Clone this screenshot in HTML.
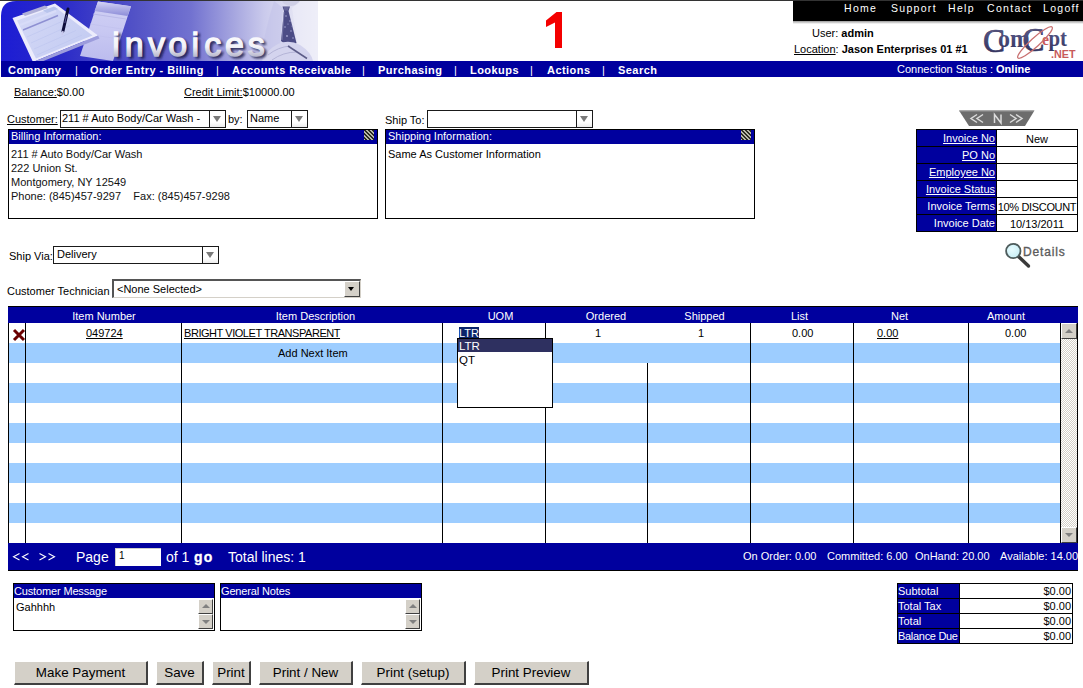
<!DOCTYPE html>
<html><head><meta charset="utf-8">
<style>
*{box-sizing:border-box;margin:0;padding:0}
html,body{width:1083px;height:688px;overflow:hidden;background:#fff}
body{position:relative;font-family:"Liberation Sans",sans-serif;font-size:11px;color:#000}
.a{position:absolute;white-space:nowrap}
.u{text-decoration:underline}
.nav{font-weight:bold;color:#fff;font-size:11px;top:64px;letter-spacing:0.45px}
.tm{color:#fff;font-size:10.5px;top:2px;letter-spacing:1.3px}
.sel{position:absolute;border:1px solid #1a1a1a;background:#fff;font-size:11px}
.sel .ar{position:absolute;right:0;top:0;bottom:0;width:16px;background:linear-gradient(#fff 70%,#ececec);border-left:1px solid #1a1a1a}
.sel .ar:after{content:"";position:absolute;left:3px;top:5px;border-left:4.5px solid transparent;border-right:4.5px solid transparent;border-top:6px solid #7a7a7a}
.sel3{position:absolute;background:#fff;border-top:2px solid #555;border-left:2px solid #555;border-right:1px solid #d4d0c8;border-bottom:1px solid #d4d0c8;font-size:11px}
.sel3 .ar{position:absolute;right:0;top:0;bottom:0;width:16px;background:#d4d0c8;border-top:1px solid #fff;border-left:1px solid #fff;border-right:1px solid #404040;border-bottom:1px solid #404040}
.sel3 .ar:after{content:"";position:absolute;left:3px;top:5px;border-left:3.5px solid transparent;border-right:3.5px solid transparent;border-top:4px solid #000}
.box{position:absolute;border:1px solid #000;background:#fff}
.ic{position:absolute;top:0px;width:10px;height:10px;background:repeating-linear-gradient(45deg,#b8b8a8 0 1.4px,#2a2a20 1.4px 2.8px)}
.box .hd{position:absolute;left:0;right:0;top:0;height:14px;background:#00009e;color:#fff;font-size:11px;padding-left:2px;line-height:13px}
.sbb{background:#d4d0c8;border-top:1px solid #fff;border-left:1px solid #fff;border-right:1px solid #404040;border-bottom:1px solid #404040}
.sbb i{position:absolute;left:3px;border-left:4px solid transparent;border-right:4px solid transparent}
.sbb i.up{top:5px;border-bottom:4px solid #808080}
.sbb i.dn{top:5px;border-top:4px solid #808080}
.btn{background:#d4d0c8;border-top:1px solid #fff;border-left:1px solid #fff;border-right:2px solid #404040;border-bottom:2px solid #404040;font-size:13.4px;text-align:center;line-height:21px}
</style></head>
<body>
<!-- top line -->
<div class="a" style="left:0;top:0;width:1083px;height:1px;background:#333"></div>

<!-- banner -->
<svg class="a" style="left:1px;top:1px" width="317" height="60" viewBox="1 1 317 60">
<defs>
<linearGradient id="bg" x1="1" y1="0" x2="318" y2="0" gradientUnits="userSpaceOnUse">
<stop offset="0" stop-color="#1c1cd4"/><stop offset="0.2" stop-color="#2c2cc8"/><stop offset="0.42" stop-color="#5252c6"/><stop offset="0.6" stop-color="#7272d0"/><stop offset="0.74" stop-color="#a8a8e0"/><stop offset="0.83" stop-color="#cacaec"/><stop offset="0.93" stop-color="#e4e4f4"/><stop offset="1" stop-color="#f0f0f8"/>
</linearGradient>
<linearGradient id="txt" x1="0" y1="30" x2="0" y2="56" gradientUnits="userSpaceOnUse"><stop offset="0" stop-color="#ffffff"/><stop offset="0.65" stop-color="#f2f2f8"/><stop offset="1" stop-color="#bcbcd0"/></linearGradient>
<linearGradient id="pad" x1="0" y1="1" x2="0" y2="61" gradientUnits="userSpaceOnUse"><stop offset="0" stop-color="#d0d0f4"/><stop offset="0.5" stop-color="#c8c8f2"/><stop offset="1" stop-color="#bcbcee"/></linearGradient>
<linearGradient id="roll" x1="0" y1="1" x2="0" y2="16" gradientUnits="userSpaceOnUse"><stop offset="0" stop-color="#d8d8f8"/><stop offset="0.45" stop-color="#b4b4e8"/><stop offset="1" stop-color="#8c8cd8"/></linearGradient>
<linearGradient id="clip" x1="20" y1="10" x2="80" y2="55" gradientUnits="userSpaceOnUse"><stop offset="0" stop-color="#d4d8f6"/><stop offset="1" stop-color="#c4ccf2"/></linearGradient>
<filter id="sh" x="-10%" y="-10%" width="130%" height="140%"><feGaussianBlur stdDeviation="1.2"/></filter>
</defs>
<path d="M1 61 V16 Q1 1 16 1 H318 V61 Z" fill="url(#bg)"/>
<!-- notepad -->
<path d="M98 1.4 L131 6.3 L113 61 L80 56 Z" fill="url(#pad)"/>
<path d="M98 1.4 L131 6.3 L127.5 16 L94.5 11 Z" fill="url(#roll)"/>
<path d="M93 14 L126 19" stroke="#b4b4e4" stroke-width="0.8"/>
<path d="M90 24 L122 29 M87 34 L119 39" stroke="#c0c0ec" stroke-width="0.6"/>
<!-- clipboard -->
<path d="M12.5 18 L55 3.5 L98 35.6 L33 62 Z" fill="#ececfc"/>
<path d="M17 20.5 L55 7 L92.5 35.5 L36 58.5 Z" fill="url(#clip)"/>
<path d="M22 13.5 L45 5.5 L48 8 L25 16 Z" fill="#b0b0d8"/>
<path d="M43 10.5 L54 6.5 L58 9 L47 13 Z" fill="#b8c4ec"/>
<path d="M23 30 L58 15.5" stroke="#8e90d2" stroke-width="1.4"/>
<path d="M20 25 L56 11" stroke="#d8dcf8" stroke-width="2"/>
<path d="M27 37 L64 20.5 M31 43 L70 25.5 M34 49 L76 30.5 M37 55 L82 35" stroke="#bcc4ee" stroke-width="0.6"/>
<path d="M33 62 L98 35.6 L99.5 38.5 L36 64 Z" fill="#9c9cdc"/>
<!-- pen -->
<path d="M68 9 L63 31" stroke="#0c0c3a" stroke-width="3" stroke-linecap="round"/>
<path d="M66.6 15 L64.8 23" stroke="#6a6aa8" stroke-width="0.8"/>
<path d="M63 31 L62.2 35" stroke="#c8c8ec" stroke-width="1.5"/>
<!-- man -->
<ellipse cx="291" cy="0" rx="9" ry="6" fill="#cfcfe6"/>
<path d="M274 1 L283 8 L279 61 L260 61 Q265 30 274 1 Z" fill="#c0c0e8" opacity="0.5"/>
<path d="M300 1 L292 8 L300 61 L318 61 L318 1 Z" fill="#ececf8" opacity="0.6"/>
<path d="M282.5 6.5 L290 6.5 L288.5 11 L296.5 43 L290.5 48 L281 41 L284 11 Z" fill="#4c4c86"/>
<path d="M283.5 7 L289 7 L288 10.5 L284.5 10.5 Z" fill="#66669a"/>
<path d="M284 12 L282 40" stroke="#8a8ab8" stroke-width="0.7"/>
<g fill="#a4a4d0"><circle cx="286" cy="16" r="0.8"/><circle cx="290" cy="21" r="0.8"/><circle cx="285" cy="27" r="0.8"/><circle cx="291" cy="31" r="0.8"/><circle cx="287" cy="36" r="0.9"/><circle cx="293" cy="38" r="0.8"/><circle cx="288" cy="24" r="0.6"/><circle cx="292" cy="26" r="0.6"/></g>
<path d="M262 61 Q266 50 278 44 Q289 39 300 45 Q311 52 313 61 Z" fill="#d4d4ee"/>
<path d="M268 55 Q278 47 290 46 M272 60 Q283 52 297 52" stroke="#b0b0d4" stroke-width="0.9" fill="none"/>
<path d="M288 46 L307 58.5" stroke="#5c5c88" stroke-width="1.5"/>
<!-- text -->
<text x="114.7 127.2 150.6 170.7 194 206.8 227.5 250.3" y="57.5" font-family="Liberation Sans" font-size="34" fill="#10103a" stroke="#10103a" stroke-width="1.3" opacity="0.75" filter="url(#sh)">invoices</text>
<text x="112.2 124.7 148.1 168.2 191.5 204.3 225 247.8" y="55.5" font-family="Liberation Sans" font-size="34" fill="url(#txt)" stroke="url(#txt)" stroke-width="1.3">invoices</text>
</svg>

<!-- red 1 -->
<svg class="a" style="left:540px;top:8px" width="30" height="44" viewBox="540 8 30 44"><path d="M556.5 12 H562 V48 H555 V22.5 L546 27 V20.5 Z" fill="#f40000"/></svg>

<!-- black bar -->
<div class="a" style="left:793px;top:1px;width:290px;height:20px;background:#000"></div>
<div class="a" style="left:793px;top:21px;width:290px;height:3px;background:linear-gradient(#9a9a9a,#fff)"></div>
<div class="a tm" style="left:844px">Home</div>
<div class="a tm" style="left:891px">Support</div>
<div class="a tm" style="left:948px">Help</div>
<div class="a tm" style="left:987px">Contact</div>
<div class="a tm" style="left:1043px">Logoff</div>

<div class="a" style="left:812px;top:27px;font-size:11px">User: <b>admin</b></div>
<div class="a" style="left:794px;top:43px;font-size:11px"><span class="u">Location</span>: <b>Jason Enterprises 01 #1</b></div>

<!-- logo -->
<svg class="a" style="left:980px;top:22px" width="100" height="40" viewBox="980 22 100 40">
<defs><linearGradient id="lg" x1="0" y1="28" x2="0" y2="52" gradientUnits="userSpaceOnUse"><stop offset="0" stop-color="#5a5a8a"/><stop offset="1" stop-color="#34345e"/></linearGradient></defs>
<g font-family="Liberation Serif" fill="url(#lg)" stroke="#3c3c68" stroke-width="0.7">
<text x="983" y="51.5" font-size="33">C</text>
<text x="1022.5" y="51.2" font-size="33">C</text>
</g>
<g font-family="Liberation Serif" font-weight="bold" fill="url(#lg)">
<text x="998" y="47" font-size="25" textLength="32" lengthAdjust="spacingAndGlyphs">om</text>
<text x="1048.5" y="45.5" font-size="24" textLength="18.5" lengthAdjust="spacingAndGlyphs">pt</text>
</g>
<text x="1042" y="45.3" font-family="Liberation Serif" font-weight="bold" font-size="17" fill="#c85a5a" textLength="7" lengthAdjust="spacingAndGlyphs">e</text>
<ellipse cx="1035" cy="42.5" rx="23" ry="4.5" transform="rotate(-42 1035 42.5)" fill="none" stroke="#c87070" stroke-width="1.3"/>
<text x="1051" y="57.5" font-family="Liberation Sans" font-weight="bold" font-size="11.5" fill="#c85a5a" textLength="24.5" lengthAdjust="spacingAndGlyphs">.NET</text>
</svg>
<!-- nav bar -->
<div class="a" style="left:1px;top:61px;width:1082px;height:16px;background:#00009e"></div>
<div class="a nav" style="left:8px">Company</div>
<div class="a nav" style="left:75px;font-weight:normal">|</div>
<div class="a nav" style="left:90px">Order Entry - Billing</div>
<div class="a nav" style="left:216px;font-weight:normal">|</div>
<div class="a nav" style="left:232px">Accounts Receivable</div>
<div class="a nav" style="left:362px;font-weight:normal">|</div>
<div class="a nav" style="left:378px">Purchasing</div>
<div class="a nav" style="left:454px;font-weight:normal">|</div>
<div class="a nav" style="left:470px">Lookups</div>
<div class="a nav" style="left:530px;font-weight:normal">|</div>
<div class="a nav" style="left:547px">Actions</div>
<div class="a nav" style="left:602px;font-weight:normal">|</div>
<div class="a nav" style="left:618px">Search</div>
<div class="a" style="left:897px;top:63px;color:#fff;font-size:11px">Connection Status : <b>Online</b></div>

<!-- balance row -->
<div class="a" style="left:14px;top:86px"><span class="u">Balance:</span>$0.00</div>
<div class="a" style="left:184px;top:86px"><span class="u">Credit Limit:</span>$10000.00</div>

<!-- customer row -->
<div class="a" style="left:7px;top:113px"><span class="u">Customer:</span></div>
<div class="sel" style="left:60px;top:110px;width:166px;height:18px"><span style="position:absolute;left:1px;top:1px">211 # Auto Body/Car Wash -</span><div class="ar"></div></div>
<div class="a" style="left:228px;top:113px">by:</div>
<div class="sel" style="left:247px;top:110px;width:61px;height:18px"><span style="position:absolute;left:2px;top:1px">Name</span><div class="ar"></div></div>
<div class="a" style="left:385px;top:114px">Ship To:</div>
<div class="sel" style="left:427px;top:110px;width:166px;height:18px"><span style="position:absolute;left:2px;top:1px"></span><div class="ar"></div></div>

<!-- billing box -->
<div class="box" style="left:8px;top:129px;width:370px;height:90px"><div class="hd">Billing Information:</div><i class="ic" style="left:355px"></i></div>
<div class="a" style="left:11px;top:147px;line-height:14px;color:#111">211 # Auto Body/Car Wash<br>222 Union St.<br>Montgomery, NY 12549<br>Phone: (845)457-9297&nbsp;&nbsp;&nbsp; Fax: (845)457-9298</div>
<div class="box" style="left:385px;top:129px;width:370px;height:90px"><div class="hd">Shipping Information:</div><i class="ic" style="left:355px"></i></div>
<div class="a" style="left:388px;top:148px">Same As Customer Information</div>


<!-- invoice nav -->
<svg class="a" style="left:955px;top:106px" width="85" height="24" viewBox="955 106 85 24">
<path d="M959 110.5 H1034.5 L1025 126 H969 Z" fill="#6c6c6c"/>
<path d="M959.5 111 H1034" stroke="#9a9a9a" stroke-width="1"/>
<g fill="none" stroke="#dcdcdc" stroke-width="1.5">
<path d="M977 114.5 L971 118.5 L977 122.5 M983 114.5 L977 118.5 L983 122.5"/>
<path d="M1010 114.5 L1016 118.5 L1010 122.5 M1016 114.5 L1022 118.5 L1016 122.5"/>
<path d="M994.5 123 V114.5 L1001 123 V114.5"/>
</g>
</svg>

<!-- invoice table -->
<div class="a" style="left:916px;top:129px;width:162px;height:103px;background:#000"></div>
<div class="a" style="left:917px;top:130px;width:79px;height:16px;background:#00009e;color:#fff;text-align:right;padding-right:1px;line-height:16px"><span class=u>Invoice No</span></div>
<div class="a" style="left:997px;top:130px;width:80px;height:16px;background:#fff;text-align:center;line-height:16px;padding-top:1px">New</div>
<div class="a" style="left:917px;top:147px;width:79px;height:16px;background:#00009e;color:#fff;text-align:right;padding-right:1px;line-height:16px"><span class=u>PO No</span></div>
<div class="a" style="left:997px;top:147px;width:80px;height:16px;background:#fff;text-align:center;line-height:16px;padding-top:1px"></div>
<div class="a" style="left:917px;top:164px;width:79px;height:16px;background:#00009e;color:#fff;text-align:right;padding-right:1px;line-height:16px"><span class=u>Employee No</span></div>
<div class="a" style="left:997px;top:164px;width:80px;height:16px;background:#fff;text-align:center;line-height:16px;padding-top:1px"></div>
<div class="a" style="left:917px;top:181px;width:79px;height:16px;background:#00009e;color:#fff;text-align:right;padding-right:1px;line-height:16px"><span class=u>Invoice Status</span></div>
<div class="a" style="left:997px;top:181px;width:80px;height:16px;background:#fff;text-align:center;line-height:16px;padding-top:1px"></div>
<div class="a" style="left:917px;top:198px;width:79px;height:16px;background:#00009e;color:#fff;text-align:right;padding-right:1px;line-height:16px">Invoice Terms</div>
<div class="a" style="left:997px;top:198px;width:80px;height:16px;background:#fff;text-align:center;line-height:16px;padding-top:1px"><span style="letter-spacing:-0.35px">10% DISCOUNT</span></div>
<div class="a" style="left:917px;top:215px;width:79px;height:16px;background:#00009e;color:#fff;text-align:right;padding-right:1px;line-height:16px">Invoice Date</div>
<div class="a" style="left:997px;top:215px;width:80px;height:16px;background:#fff;text-align:center;line-height:16px;padding-top:1px">10/13/2011</div>
<!-- details -->
<svg class="a" style="left:1000px;top:238px" width="40" height="34" viewBox="1000 238 40 34">
<defs><radialGradient id="lens" cx="0.4" cy="0.4" r="0.7"><stop offset="0" stop-color="#e8fcff"/><stop offset="1" stop-color="#c4ecf4"/></radialGradient></defs>
<path d="M1018.5 256.5 L1028.5 266" stroke="#3a3a3a" stroke-width="3.4" stroke-linecap="round"/>
<circle cx="1013.3" cy="251" r="7.2" fill="url(#lens)" stroke="#4e5c5c" stroke-width="1.8"/>
</svg>
<div class="a" style="left:1023px;top:245px;font-size:12px;color:#5c5c5c;letter-spacing:0.85px;-webkit-text-stroke:0.35px #5c5c5c">Details</div>

<!-- ship via -->
<div class="a" style="left:9px;top:250px">Ship Via:</div>
<div class="sel" style="left:53px;top:246px;width:166px;height:18px"><span style="position:absolute;left:3px;top:1px">Delivery</span><div class="ar"></div></div>

<!-- technician -->
<div class="a" style="left:7px;top:285px">Customer Technician</div>
<div class="sel3" style="left:112px;top:279px;width:249px;height:19px"><span style="position:absolute;left:3px;top:2px">&lt;None Selected&gt;</span><div class="ar"></div></div>
<!-- grid -->
<div class="a" style="left:8px;top:306px;width:1070px;height:17px;background:#00009e;border-top:1px solid #000"></div>
<div class="a" style="left:8px;top:323px;width:1053px;height:20px;background:#fff"></div>
<div class="a" style="left:8px;top:343px;width:1053px;height:20px;background:#9dcdff"></div>
<div class="a" style="left:8px;top:363px;width:1053px;height:20px;background:#fff"></div>
<div class="a" style="left:8px;top:383px;width:1053px;height:20px;background:#9dcdff"></div>
<div class="a" style="left:8px;top:403px;width:1053px;height:20px;background:#fff"></div>
<div class="a" style="left:8px;top:423px;width:1053px;height:20px;background:#9dcdff"></div>
<div class="a" style="left:8px;top:443px;width:1053px;height:20px;background:#fff"></div>
<div class="a" style="left:8px;top:463px;width:1053px;height:20px;background:#9dcdff"></div>
<div class="a" style="left:8px;top:483px;width:1053px;height:20px;background:#fff"></div>
<div class="a" style="left:8px;top:503px;width:1053px;height:20px;background:#9dcdff"></div>
<div class="a" style="left:8px;top:523px;width:1053px;height:20px;background:#fff"></div>
<div class="a" style="left:8px;top:323px;width:1px;height:220px;background:#000"></div>
<div class="a" style="left:25px;top:323px;width:1px;height:220px;background:#000"></div>
<div class="a" style="left:181px;top:323px;width:1px;height:220px;background:#000"></div>
<div class="a" style="left:442px;top:323px;width:1px;height:220px;background:#000"></div>
<div class="a" style="left:545px;top:323px;width:1px;height:220px;background:#000"></div>
<div class="a" style="left:750px;top:323px;width:1px;height:220px;background:#000"></div>
<div class="a" style="left:853px;top:323px;width:1px;height:220px;background:#000"></div>
<div class="a" style="left:968px;top:323px;width:1px;height:220px;background:#000"></div>
<div class="a" style="left:1060px;top:323px;width:1px;height:220px;background:#000"></div>
<div class="a" style="left:1077px;top:323px;width:1px;height:220px;background:#000"></div>
<div class="a" style="left:647px;top:363px;width:1px;height:180px;background:#000"></div>
<div class="a" style="left:1061px;top:323px;width:16px;height:220px;background-color:#fff;background-image:repeating-conic-gradient(#d4d0c8 0 25%,#fff 0 50%);background-size:2px 2px"></div>
<div class="a sbb" style="left:1061px;top:323px;width:16px;height:16px"><i class="up"></i></div>
<div class="a sbb" style="left:1061px;top:527px;width:16px;height:16px"><i class="dn"></i></div>
<div class="a" style="left:26px;top:309px;width:156px;text-align:center;color:#fff;line-height:14px">Item Number</div>
<div class="a" style="left:185px;top:309px;width:261px;text-align:center;color:#fff;line-height:14px">Item Description</div>
<div class="a" style="left:449px;top:309px;width:103px;text-align:center;color:#fff;line-height:14px">UOM</div>
<div class="a" style="left:555px;top:309px;width:102px;text-align:center;color:#fff;line-height:14px">Ordered</div>
<div class="a" style="left:653px;top:309px;width:103px;text-align:center;color:#fff;line-height:14px">Shipped</div>
<div class="a" style="left:748px;top:309px;width:103px;text-align:center;color:#fff;line-height:14px">List</div>
<div class="a" style="left:842px;top:309px;width:115px;text-align:center;color:#fff;line-height:14px">Net</div>
<div class="a" style="left:960px;top:309px;width:92px;text-align:center;color:#fff;line-height:14px">Amount</div>
<svg class="a" style="left:12px;top:328px" width="14" height="14" viewBox="0 0 14 14"><path d="M2 2 L12 12 M12 2 L2 12" stroke="#6b0000" stroke-width="3"/></svg>
<div class="a u" style="left:86px;top:327px">049724</div>
<div class="a u" style="left:184px;top:327px;letter-spacing:-0.45px">BRIGHT VIOLET TRANSPARENT</div>
<div class="a" style="left:459px;top:327px;height:11px;width:20px;background:#0a246a"></div>
<div class="a" style="left:459px;top:327px;color:#fff">LTR</div>
<div class="a" style="left:595px;top:327px">1</div>
<div class="a" style="left:698px;top:327px">1</div>
<div class="a" style="left:792px;top:327px">0.00</div>
<div class="a u" style="left:877px;top:327px">0.00</div>
<div class="a" style="left:1005px;top:327px">0.00</div>
<div class="a" style="left:278px;top:347px">Add Next Item</div>
<div class="a" style="left:457px;top:338px;width:96px;height:70px;background:#fff;border:1px solid #000"></div>
<div class="a" style="left:458px;top:339px;width:94px;height:13px;background:#2e3060"></div>
<div class="a" style="left:459px;top:340px;color:#fff;font-size:11.5px;line-height:13px">LTR</div>
<div class="a" style="left:459px;top:354px;font-size:11.5px;line-height:13px">QT</div>
<div class="a" style="left:8px;top:543px;width:1070px;height:28px;background:#00009e;border-bottom:1px solid #000"></div>
<svg class="a" style="left:10px;top:550px" width="50" height="14" viewBox="10 550 50 14"><path d="M19.5 553.5 L13.5 556.8 L19.5 560 M28.5 553.5 L22.5 556.8 L28.5 560 M39.5 553.5 L45.5 556.8 L39.5 560 M48.5 553.5 L54.5 556.8 L48.5 560" fill="none" stroke="#fff" stroke-width="1.1"/></svg>
<div class="a" style="left:76px;top:549px;color:#fff;font-size:14px">Page</div>
<div class="a" style="left:115px;top:548px;width:46px;height:18px;background:#fff;border-top:1px solid #ccc;border-left:1px solid #ccc;font-size:10px;padding-left:3px;line-height:14px">1</div>
<div class="a" style="left:166px;top:549px;color:#fff;font-size:14px">of 1</div><div class="a" style="left:194px;top:549px;color:#fff;font-size:14px;font-weight:bold;letter-spacing:1.2px;-webkit-text-stroke:0.3px #fff">go</div>
<div class="a" style="left:228px;top:549px;color:#fff;font-size:14px">Total lines: 1</div>
<div class="a" style="left:743px;top:550px;color:#fff;font-size:11px;">On Order: 0.00</div><div class="a" style="left:827px;top:550px;color:#fff;font-size:11px;">Committed: 6.00</div><div class="a" style="left:915px;top:550px;color:#fff;font-size:11px;">OnHand: 20.00</div><div class="a" style="left:1000px;top:550px;color:#fff;font-size:11px;">Available: 14.00</div>
<!-- bottom -->
<div class="a" style="left:13px;top:583px;width:202px;height:48px;border:1px solid #000;background:#fff"></div>
<div class="a" style="left:14px;top:584px;width:200px;height:14px;background:#00009e;color:#fff;line-height:14px;letter-spacing:-0.15px">Customer Message</div>
<div class="a sbb" style="left:198px;top:599px;width:15px;height:15px"><i class="up" style="left:3px;top:4px"></i></div>
<div class="a sbb" style="left:198px;top:614px;width:15px;height:15px"><i class="dn" style="left:3px;top:5px"></i></div>
<div class="a" style="left:16px;top:601px">Gahhhh</div>
<div class="a" style="left:220px;top:583px;width:202px;height:48px;border:1px solid #000;background:#fff"></div>
<div class="a" style="left:221px;top:584px;width:200px;height:14px;background:#00009e;color:#fff;line-height:14px;letter-spacing:-0.15px">General Notes</div>
<div class="a sbb" style="left:405px;top:599px;width:15px;height:15px"><i class="up" style="left:3px;top:4px"></i></div>
<div class="a sbb" style="left:405px;top:614px;width:15px;height:15px"><i class="dn" style="left:3px;top:5px"></i></div>
<div class="a" style="left:897px;top:583px;width:176px;height:61px;background:#000"></div>
<div class="a" style="left:898px;top:584px;width:61px;height:14px;background:#00009e;color:#fff;line-height:14px">Subtotal</div>
<div class="a" style="left:960px;top:584px;width:112px;height:14px;background:#fff;text-align:right;line-height:14px;padding-right:1px">$0.00</div>
<div class="a" style="left:898px;top:599px;width:61px;height:14px;background:#00009e;color:#fff;line-height:14px">Total Tax</div>
<div class="a" style="left:960px;top:599px;width:112px;height:14px;background:#fff;text-align:right;line-height:14px;padding-right:1px">$0.00</div>
<div class="a" style="left:898px;top:614px;width:61px;height:14px;background:#00009e;color:#fff;line-height:14px">Total</div>
<div class="a" style="left:960px;top:614px;width:112px;height:14px;background:#fff;text-align:right;line-height:14px;padding-right:1px">$0.00</div>
<div class="a" style="left:898px;top:629px;width:61px;height:14px;background:#00009e;color:#fff;line-height:14px;letter-spacing:-0.3px">Balance Due</div>
<div class="a" style="left:960px;top:629px;width:112px;height:14px;background:#fff;text-align:right;line-height:14px;padding-right:1px">$0.00</div>
<div class="a btn" style="left:14px;top:661px;width:134px;height:24px">Make Payment</div>
<div class="a btn" style="left:156px;top:661px;width:48px;height:24px">Save</div>
<div class="a btn" style="left:212px;top:661px;width:39px;height:24px">Print</div>
<div class="a btn" style="left:259px;top:661px;width:94px;height:24px">Print / New</div>
<div class="a btn" style="left:361px;top:661px;width:105px;height:24px">Print (setup)</div>
<div class="a btn" style="left:474px;top:661px;width:115px;height:24px">Print Preview</div>
</body></html>
